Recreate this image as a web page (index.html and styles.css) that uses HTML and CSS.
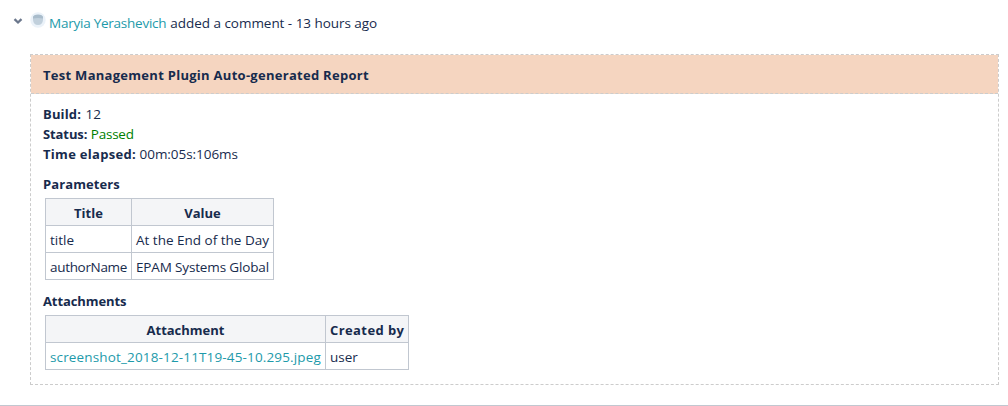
FILE: index.html
```html
<!DOCTYPE html>
<html lang="en">
<head>
<meta charset="utf-8">
<title>Comment</title>
<link rel="stylesheet" href="styles.css">
</head>
<body>
<article class="comment">
  <header class="comment-head">
    <svg class="chevron" width="10" height="8" viewBox="0 0 10 8"><path d="M1.500 2.200 L5 5.500 L8.500 2.200" fill="none" stroke="#6b778c" stroke-width="2.300"/></svg>
    <svg class="avatar" width="16" height="16" viewBox="0 0 16 16"><circle cx="8" cy="8" r="7.700" fill="#ebf2f9"/><path d="M3 5.500 Q3 3 8 3 Q13 3 13 5.500 V8 Q12.500 13 8 13 Q3.500 13 3 8 Z" fill="#c1d0dc"/><path d="M3 6.500 V5 Q3.500 2.500 8 2.500 Q12.500 2.500 13 5 V6.500 Q8 5.500 3 6.500 Z" fill="#a9bccb"/></svg>
    <a class="link author">Maryia Yerashevich</a>
    <span class="action">added a comment - 13 hours ago</span>
  </header>
  <section class="panel">
    <div class="panel-header"><b class="report-title">Test Management Plugin Auto-generated Report</b></div>
    <div class="panel-body">
      <div class="line"><b class="build">Build:</b> <span>12</span></div>
      <div class="line"><b class="status">Status:</b> <span class="passed">Passed</span></div>
      <div class="line"><b class="elapsed">Time elapsed:</b> <span class="duration">00m:05s:106ms</span></div>
      <div class="heading"><b class="parameters">Parameters</b></div>
      <table class="params">
        <colgroup><col class="c-title"><col class="c-value"></colgroup>
        <tr><th>Title</th><th>Value</th></tr>
        <tr><td>title</td><td><span class="day">At the End of the Day</span></td></tr>
        <tr><td><span class="author-name">authorName</span></td><td><span class="epam">EPAM Systems Global</span></td></tr>
      </table>
      <div class="heading"><b class="attachments">Attachments</b></div>
      <table class="files">
        <colgroup><col class="c-file"><col class="c-user"></colgroup>
        <tr><th>Attachment</th><th><span class="created">Created by</span></th></tr>
        <tr><td><a class="link file">screenshot_2018-12-11T19-45-10.295.jpeg</a></td><td>user</td></tr>
      </table>
    </div>
  </section>
</article>
</body>
</html>
```
FILE: styles.css
```css
* { box-sizing: border-box; }
body {
  margin: 0;
  background: #fff;
  color: #172b4d;
  font: 13.5px/20px "Open Sans", "Noto Sans", sans-serif;
}
b, th { font-weight: 700; font-size: 13px; }
.comment { height: 406px; padding: 13px 9px 0 0; border-bottom: 1px solid #c1c7d0; }
.comment-head { display: flex; height: 20px; padding-left: 13px; white-space: nowrap; }
.chevron { margin: 4px 7px 0 0; }
.avatar { margin: -1px 3px 0 0; }
.author { margin-right: 4px; letter-spacing: -0.24px; }
.action { letter-spacing: -0.04px; }
.link { color: #1d9aaa; }
.panel { height: 331px; margin: 21px 0 0 30px; border: 1px dashed #ccc; }
.panel-header { height: 39px; padding: 10px 12px 0; border-bottom: 1px dashed #ccc; background: #f5d5c0; line-height: 20px; }
.report-title { letter-spacing: 0.28px; }
.panel-body { padding: 10px 12px; }
.line { height: 20px; white-space: nowrap; }
.build { letter-spacing: 0.15px; margin-right: 1px; }
.status { letter-spacing: -0.1px; }
.elapsed { letter-spacing: 0.3px; }
.duration { letter-spacing: -0.05px; }
.passed { color: #008000; letter-spacing: -0.25px; }
.heading { height: 20px; margin-top: 10px; }
.parameters { letter-spacing: 0.1px; }
.attachments { letter-spacing: -0.1px; }
table { table-layout: fixed; border-collapse: collapse; margin: 4px 0 0 2px; }
.params { width: 229px; }
.files { width: 364px; }
.c-title { width: 86px; }
.c-value { width: 142px; }
.c-file { width: 280px; }
.c-user { width: 83px; }
.params + .heading { margin-top: 11px; }
tr { height: 27px; }
th, td { padding: 4px 4px 2px; border: 1px solid #c1c7d0; white-space: nowrap; line-height: 20px; }
th { background: #f4f5f7; text-align: center; }
td { text-align: left; }
.author-name { letter-spacing: -0.32px; }
.epam { letter-spacing: -0.15px; }
.created { letter-spacing: 0.4px; margin-right: -0.4px; }
.file { letter-spacing: 0.15px; }
```
